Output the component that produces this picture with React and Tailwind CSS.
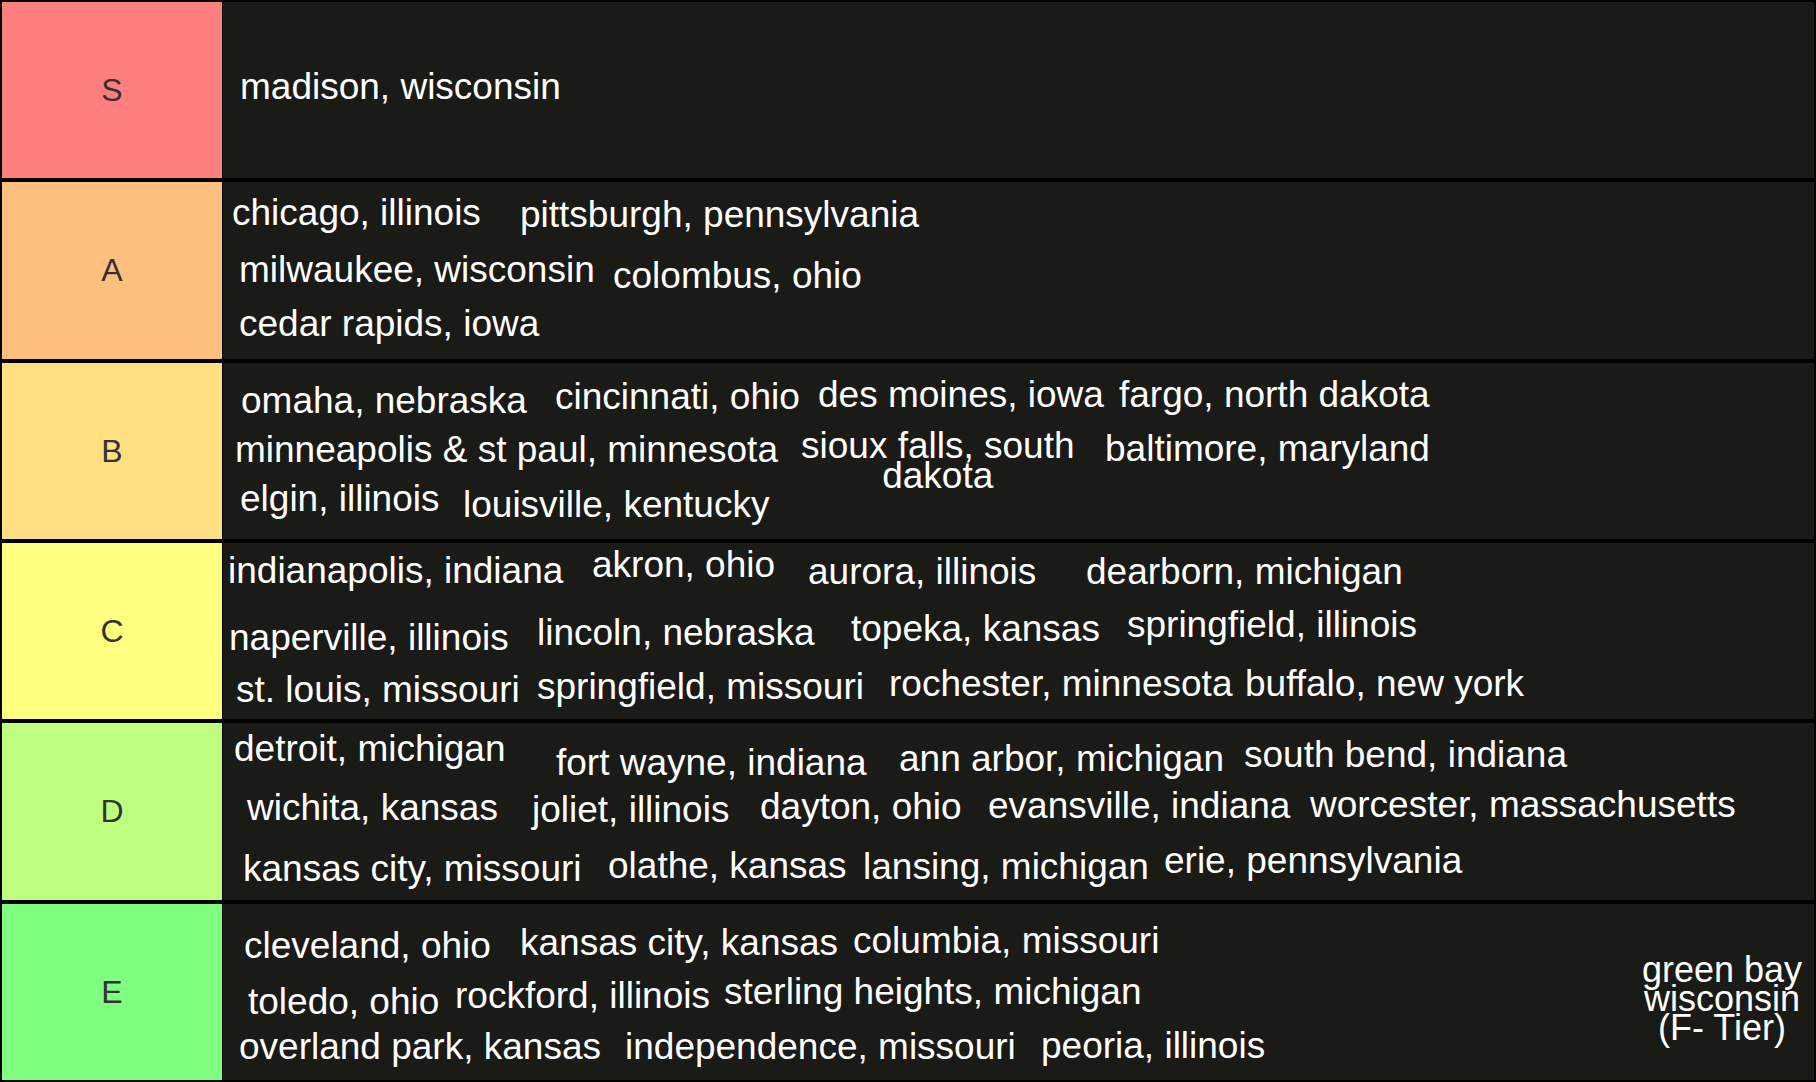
import React from "react";

function I({ className = "", children }) {
  return (
    <div className={"shrink-0 whitespace-nowrap text-[37px] leading-[40px] text-white " + className}>
      {children}
    </div>
  );
}

function Row({ color, label, children, contentClass = "" }) {
  return (
    <div className="flex flex-1 min-h-0">
      <div className={"w-[220px] shrink-0 flex items-center justify-center text-[32px] text-[#333333] " + color}>
        {label}
      </div>
      <div className={"ml-[1px] flex-1 min-w-0 bg-[#1a1a17] overflow-hidden " + contentClass}>{children}</div>
    </div>
  );
}

export default function App() {
  return (
    <div className="w-[1816px] h-[1082px] bg-black p-[2px] flex flex-col gap-[4px] font-['Liberation_Sans',Arial,sans-serif]">
      <Row color="bg-[#ff7f7f]" label="S">
        <div className="flex flex-col pt-[65px] pl-[17px]">
          <I>madison, wisconsin</I>
        </div>
      </Row>

      <Row color="bg-[#ffbf7f]" label="A">
        <div className="flex flex-col pt-[11px]">
          <div className="flex h-[57px] pl-[9px]">
            <I className="w-[288px]">chicago, illinois</I>
            <I className="mt-[2px]">pittsburgh, pennsylvania</I>
          </div>
          <div className="flex h-[54px] pl-[16px]">
            <I className="w-[374px]">milwaukee, wisconsin</I>
            <I className="mt-[6px]">colombus, ohio</I>
          </div>
          <div className="flex pl-[16px]">
            <I>cedar rapids, iowa</I>
          </div>
        </div>
      </Row>

      <Row color="bg-[#ffdf7f]" label="B">
        <div className="flex flex-col pt-[12px]">
          <div className="flex h-[54px] pl-[18px]">
            <I className="w-[314px] mt-[6px]">omaha, nebraska</I>
            <I className="w-[263px] mt-[2px]">cincinnati, ohio</I>
            <I className="w-[301px]">des moines, iowa</I>
            <I>fargo, north dakota</I>
          </div>
          <div className="flex h-[50px] pl-[12px]">
            <I className="w-[566px] mt-[1px]">minneapolis &amp; st paul, minnesota</I>
            <div className="w-[304px] shrink-0 mt-[2px]">
              <div className="inline-block text-center whitespace-nowrap text-[37px] leading-[30px] text-white">
                sioux falls, south
                <br />
                dakota
              </div>
            </div>
            <I>baltimore, maryland</I>
          </div>
          <div className="flex pl-[17px]">
            <I className="w-[223px]">elgin, illinois</I>
            <I className="mt-[6px]">louisville, kentucky</I>
          </div>
        </div>
      </Row>

      <Row color="bg-[#ffff7f]" label="C">
        <div className="flex flex-col pt-[2px]">
          <div className="flex h-[60px] pl-[5px]">
            <I className="w-[364px] mt-[6px]">indianapolis, indiana</I>
            <I className="w-[216px]">akron, ohio</I>
            <I className="w-[278px] mt-[7px]">aurora, illinois</I>
            <I className="mt-[7px]">dearborn, michigan</I>
          </div>
          <div className="flex h-[59px] pl-[6px]">
            <I className="w-[308px] mt-[13px]">naperville, illinois</I>
            <I className="w-[314px] mt-[8px]">lincoln, nebraska</I>
            <I className="w-[276px] mt-[4px]">topeka, kansas</I>
            <I>springfield, illinois</I>
          </div>
          <div className="flex pl-[13px]">
            <I className="w-[301px] mt-[6px]">st. louis, missouri</I>
            <I className="w-[352px] mt-[3px]">springfield, missouri</I>
            <I className="w-[356px]">rochester, minnesota</I>
            <I>buffalo, new york</I>
          </div>
        </div>
      </Row>

      <Row color="bg-[#bfff7f]" label="D">
        <div className="flex flex-col pt-[6px]">
          <div className="flex h-[56px] pl-[11px]">
            <I className="w-[322px]">detroit, michigan</I>
            <I className="w-[343px] mt-[14px]">fort wayne, indiana</I>
            <I className="w-[345px] mt-[10px]">ann arbor, michigan</I>
            <I className="mt-[6px]">south bend, indiana</I>
          </div>
          <div className="flex h-[56px] pl-[24px]">
            <I className="w-[285px] mt-[3px]">wichita, kansas</I>
            <I className="w-[228px] mt-[5px]">joliet, illinois</I>
            <I className="w-[228px] mt-[2px]">dayton, ohio</I>
            <I className="w-[322px] mt-[1px]">evansville, indiana</I>
            <I>worcester, massachusetts</I>
          </div>
          <div className="flex pl-[20px]">
            <I className="w-[365px] mt-[8px]">kansas city, missouri</I>
            <I className="w-[255px] mt-[5px]">olathe, kansas</I>
            <I className="w-[301px] mt-[6px]">lansing, michigan</I>
            <I>erie, pennsylvania</I>
          </div>
        </div>
      </Row>

      <Row color="bg-[#7fff7f]" label="E" contentClass="flex">
        <div className="flex flex-col flex-1 pt-[17px]">
          <div className="flex h-[51px] pl-[21px]">
            <I className="w-[276px] mt-[5px]">cleveland, ohio</I>
            <I className="w-[333px] mt-[2px]">kansas city, kansas</I>
            <I>columbia, missouri</I>
          </div>
          <div className="flex h-[54px] pl-[25px]">
            <I className="w-[207px] mt-[10px]">toledo, ohio</I>
            <I className="w-[269px] mt-[4px]">rockford, illinois</I>
            <I>sterling heights, michigan</I>
          </div>
          <div className="flex pl-[16px]">
            <I className="w-[386px] mt-[1px]">overland park, kansas</I>
            <I className="w-[416px] mt-[1px]">independence, missouri</I>
            <I>peoria, illinois</I>
          </div>
        </div>
        <div className="shrink-0 self-start mt-[51px] mr-[12px] flex flex-col items-center whitespace-nowrap text-[36px] leading-[29px] text-white">
          <div>green bay</div>
          <div>wisconsin</div>
          <div>(F- Tier)</div>
        </div>
      </Row>
    </div>
  );
}
